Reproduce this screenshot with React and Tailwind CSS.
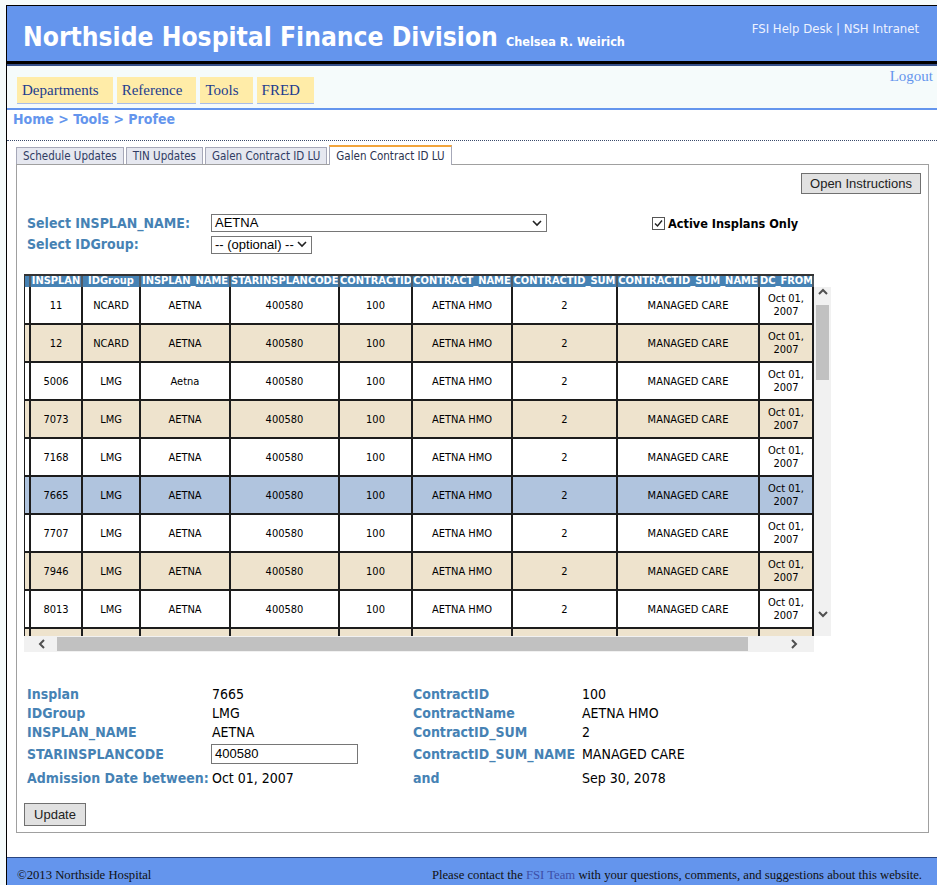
import React from "react";

const TA = "[font-family:'DejaVu_Sans_Condensed','DejaVu_Sans',sans-serif]";
const SERIF = "[font-family:'Liberation_Serif','Times_New_Roman',serif]";
const ARIAL = "[font-family:'Liberation_Sans',Arial,sans-serif]";
const GRID = "grid grid-cols-[6px_52px_58px_90px_109px_73px_100px_105px_142px_54px_90px]";

const rows = [
  ["11", "NCARD", "AETNA", "bg-white", "Oct 01,\n2007"],
  ["12", "NCARD", "AETNA", "bg-[#eee3cd]", "Oct 01,\n2007"],
  ["5006", "LMG", "Aetna", "bg-white", "Oct 01,\n2007"],
  ["7073", "LMG", "AETNA", "bg-[#eee3cd]", "Oct 01,\n2007"],
  ["7168", "LMG", "AETNA", "bg-white", "Oct 01,\n2007"],
  ["7665", "LMG", "AETNA", "bg-[#b0c4de]", "Oct 01,\n2007"],
  ["7707", "LMG", "AETNA", "bg-white", "Oct 01,\n2007"],
  ["7946", "LMG", "AETNA", "bg-[#eee3cd]", "Oct 01,\n2007"],
  ["8013", "LMG", "AETNA", "bg-white", "Oct 01,\n2007"],
  ["8064", "LMG", "AETNA", "bg-[#eee3cd]", "Jan 01,\n2008"],
];

const headers = [
  "",
  "INSPLAN",
  "IDGroup",
  "INSPLAN_NAME",
  "STARINSPLANCODE",
  "CONTRACTID",
  "CONTRACT_NAME",
  "CONTRACTID_SUM",
  "CONTRACTID_SUM_NAME",
  "DC_FROM",
  "DC_TO",
];

function Chevron({ dir, className }) {
  const pts = {
    up: "1,6 5,2 9,6",
    down: "1,2 5,6 9,2",
    left: "6,1 2,5 6,9",
    right: "2,1 6,5 2,9",
  }[dir];
  return (
    <svg width="10" height="10" viewBox="0 0 10 10" className={className}>
      <polyline points={pts} fill="none" stroke="#505050" strokeWidth="2" />
    </svg>
  );
}

function DataRow({ r }) {
  const cells = ["", r[0], r[1], r[2], "400580", "100", "AETNA HMO", "2", "MANAGED CARE", r[4], "Sep 30,\n2078"];
  return (
    <div className={`${GRID} h-[38px] shrink-0 ${r[3]}`}>
      {cells.map((c, i) => (
        <div
          key={i}
          className="flex items-center justify-center overflow-hidden whitespace-pre-line border-b-2 border-r-2 border-[#1c1c1c] text-center leading-[13px]"
        >
          {c}
        </div>
      ))}
    </div>
  );
}

function Select({ value, className }) {
  return (
    <div
      className={`flex h-[18px] items-center justify-between border border-[#767676] bg-white pl-[3px] pr-[4px] ${ARIAL} text-[13px] text-black ${className}`}
    >
      <span className="leading-[16px]">{value}</span>
      <svg width="10" height="7" viewBox="0 0 10 7">
        <polyline points="1,1 5,5 9,1" fill="none" stroke="#222" strokeWidth="1.6" />
      </svg>
    </div>
  );
}

function Label({ children }) {
  return <div className="text-[14px] font-bold text-[#4682b4]">{children}</div>;
}

export default function App() {
  return (
    <div className="min-h-[885px] bg-[#f5fbfb] pl-[6px] pt-[5px]">
      <div className="flex min-h-[880px] flex-col border-l border-t border-black bg-white">
        {/* Header */}
        <header className="flex h-[55px] items-start justify-between bg-[#6495ed] pl-[16px] pr-[18px]">
          <div className={`flex items-baseline pt-[18px] font-bold text-white ${TA}`}>
            <span className="text-[26.2px] leading-[26px]">Northside Hospital Finance Division</span>
            <span className="ml-[8px] text-[12.6px]">Chelsea R. Weirich</span>
          </div>
          <div className={`pt-[13px] text-[13px] text-[#eef2ff] ${TA}`}>FSI Help Desk | NSH Intranet</div>
        </header>
        <div className="h-[3px] bg-black" />
        <div className="h-[2px] bg-[#35508a]" />

        {/* Nav */}
        <nav className="flex h-[42px] items-start justify-between bg-[#f5fbfb] pl-[10px] pr-[4px]">
          <div className={`mt-[11px] flex gap-[4px] ${SERIF} text-[15px] text-[#233c8e]`}>
            {["Departments", "Reference", "Tools", "FRED"].map((t) => (
              <span key={t} className="border-b border-[#a8bde8] bg-[#ffeca8] py-[5px] pl-[5px] pr-[14px] leading-[16px]">
                {t}
              </span>
            ))}
          </div>
          <div className={`mt-[2px] ${SERIF} text-[15px] leading-[17px] text-[#6495ed]`}>Logout</div>
        </nav>
        <div className="h-[2px] bg-[#6495ed]" />

        {/* Breadcrumb */}
        <div className={`h-[31px] border-b border-dotted border-[#3a4a6a] pl-[6px] pt-[1px] text-[14px] font-bold leading-[16px] text-[#6495ed] ${TA}`}>
          Home &gt; Tools &gt; Profee
        </div>

        {/* Tabs */}
        <div className={`ml-[9px] mr-[8px] mt-[4px] flex items-end gap-[2px] ${TA} text-[11.5px]`}>
          {["Schedule Updates", "TIN Updates", "Galen Contract ID LU"].map((t) => (
            <div key={t} className="h-[17px] border border-b-0 border-[#a6a8b8] bg-[#e6e8f0] px-[6px] pt-[1px] leading-[15px] text-[#303c64]">
              {t}
            </div>
          ))}
          <div className="relative z-10 -mb-px h-[20px] border-x border-t-2 border-[#a6a8b8] border-t-[#f2a53c] bg-white px-[6px] pt-[2px] leading-[15px] text-[#2c3350]">
            Galen Contract ID LU
          </div>
        </div>

        {/* Panel */}
        <div className={`ml-[9px] mr-[8px] border border-[#a0a0a0] px-[7px] pb-[6px] pt-[8px] ${TA}`}>
          <div className="flex justify-end">
            <button className={`h-[21px] w-[120px] border border-[#707070] bg-[#e1e1e1] text-[13px] text-[#222] ${ARIAL}`}>
              Open Instructions
            </button>
          </div>

          <div className="mt-[20px] flex h-[18px] items-center pl-[3px]">
            <div className="w-[184px]">
              <Label>Select INSPLAN_NAME:</Label>
            </div>
            <Select value="AETNA" className="w-[336px]" />
            <div className="ml-[105px] flex items-center">
              <svg width="13" height="13" viewBox="0 0 13 13">
                <rect x="0.5" y="0.5" width="12" height="12" fill="#fff" stroke="#555" />
                <polyline points="3,6.5 5.5,9 10,3.5" fill="none" stroke="#222" strokeWidth="1.4" />
              </svg>
              <span className="ml-[3px] mt-[2px] text-[12.6px] font-bold text-black">Active Insplans Only</span>
            </div>
          </div>
          <div className="mt-[4px] flex h-[17px] items-center pl-[3px]">
            <div className="w-[184px]">
              <Label>Select IDGroup:</Label>
            </div>
            <Select value="-- (optional) --" className="h-[17px] w-[101px]" />
          </div>

          {/* Data grid */}
          <div className="mt-[21px] flex flex-col text-[11px] text-black">
            <div className="flex">
              <div className={`${GRID} h-[13px] w-[790px] overflow-hidden border-l border-t-2 border-[#333] bg-[#4682b4] text-[11px] font-bold leading-[9px] text-white`}>
                {headers.map((h, i) => (
                  <div key={i} className="overflow-hidden whitespace-nowrap border-r-2 border-[#4f5b66] text-center">
                    {h}
                  </div>
                ))}
              </div>
            </div>
            <div className="flex">
              <div className="flex h-[349px] w-[790px] flex-col overflow-hidden border-l border-[#1c1c1c]">
                {rows.map((r) => (
                  <DataRow key={r[0]} r={r} />
                ))}
              </div>
              <div className="flex h-[349px] w-[17px] flex-col items-center bg-[#f1f1f1]">
                <Chevron dir="up" className="mt-[1px]" />
                <div className="mt-[7px] h-[75px] w-[13px] bg-[#c1c1c1]" />
                <div className="flex-1" />
                <Chevron dir="down" className="mb-[16px]" />
              </div>
            </div>
            <div className="flex">
              <div className="flex h-[16px] w-[790px] items-center bg-[#f1f1f1]">
                <Chevron dir="left" className="ml-[14px]" />
                <div className="ml-[9px] h-[14px] w-[691px] bg-[#c1c1c1]" />
                <div className="flex-1" />
                <Chevron dir="right" className="mr-[14px]" />
              </div>
              <div className="h-[16px] w-[17px] bg-white" />
            </div>
          </div>

          {/* Detail form */}
          <div className="ml-[3px] mt-[33px] grid grid-cols-[185px_201px_169px_1fr] grid-rows-[19px_19px_19px_24px_24px] items-center text-[14px]">
            <Label>Insplan</Label>
            <div>7665</div>
            <Label>ContractID</Label>
            <div>100</div>

            <Label>IDGroup</Label>
            <div>LMG</div>
            <Label>ContractName</Label>
            <div>AETNA HMO</div>

            <Label>INSPLAN_NAME</Label>
            <div>AETNA</div>
            <Label>ContractID_SUM</Label>
            <div>2</div>

            <Label>STARINSPLANCODE</Label>
            <div>
              <div className={`-ml-[1px] flex h-[20px] w-[147px] items-center border border-[#767676] pl-[3px] ${ARIAL} text-[13px]`}>
                400580
              </div>
            </div>
            <Label>ContractID_SUM_NAME</Label>
            <div>MANAGED CARE</div>

            <Label>Admission Date between:</Label>
            <div>Oct 01, 2007</div>
            <Label>and</Label>
            <div>Sep 30, 2078</div>
          </div>

          <button className={`mt-[13px] h-[23px] w-[62px] border border-[#707070] bg-[#e1e1e1] text-[13px] text-[#222] ${ARIAL}`}>
            Update
          </button>
        </div>

        <div className="flex-1" />

        {/* Footer */}
        <footer className={`flex h-[28px] items-start justify-between border-t border-[#2a4680] bg-[#6495ed] pl-[10px] pr-[15px] pt-[10px] text-[12.7px] leading-[15px] text-[#111] ${SERIF}`}>
          <span>©2013 Northside Hospital</span>
          <span>
            Please contact the <span className="text-[#3d4fa8]">FSI Team</span> with your questions, comments, and suggestions about this website.
          </span>
        </footer>
      </div>
    </div>
  );
}
